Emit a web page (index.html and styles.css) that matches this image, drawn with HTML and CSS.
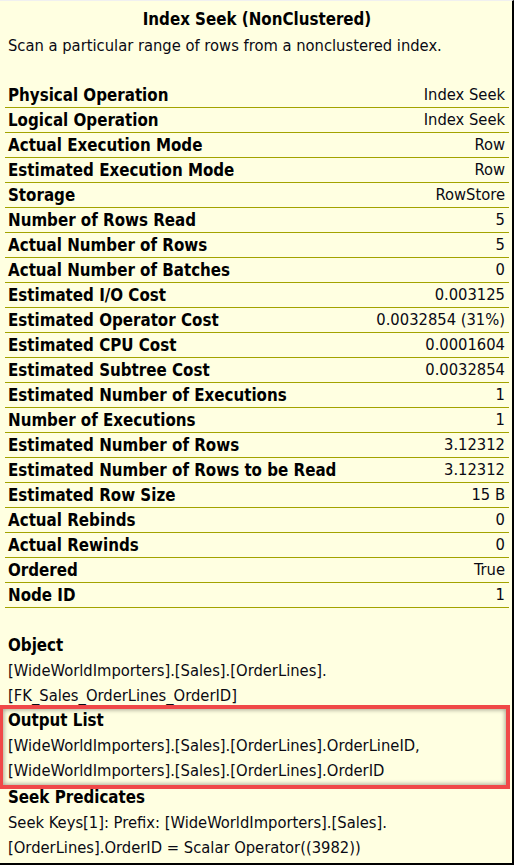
FILE: index.html
```html
<!DOCTYPE html>
<html>
<head>
<meta charset="utf-8">
<link rel="stylesheet" href="styles.css">
</head>
<body>
<div class="tip">
  <div class="title">Index Seek (NonClustered)</div>
  <div class="desc">Scan a particular range of rows from a nonclustered index.</div>
  <div class="props">
    <div class="row"><span class="k">Physical Operation</span><span class="v">Index Seek</span></div>
    <div class="row"><span class="k">Logical Operation</span><span class="v">Index Seek</span></div>
    <div class="row"><span class="k">Actual Execution Mode</span><span class="v">Row</span></div>
    <div class="row"><span class="k">Estimated Execution Mode</span><span class="v">Row</span></div>
    <div class="row"><span class="k">Storage</span><span class="v">RowStore</span></div>
    <div class="row"><span class="k">Number of Rows Read</span><span class="v">5</span></div>
    <div class="row"><span class="k">Actual Number of Rows</span><span class="v">5</span></div>
    <div class="row"><span class="k">Actual Number of Batches</span><span class="v">0</span></div>
    <div class="row"><span class="k">Estimated I/O Cost</span><span class="v">0.003125</span></div>
    <div class="row"><span class="k">Estimated Operator Cost</span><span class="v">0.0032854 (31%)</span></div>
    <div class="row"><span class="k">Estimated CPU Cost</span><span class="v">0.0001604</span></div>
    <div class="row"><span class="k">Estimated Subtree Cost</span><span class="v">0.0032854</span></div>
    <div class="row"><span class="k">Estimated Number of Executions</span><span class="v">1</span></div>
    <div class="row"><span class="k">Number of Executions</span><span class="v">1</span></div>
    <div class="row"><span class="k">Estimated Number of Rows</span><span class="v">3.12312</span></div>
    <div class="row"><span class="k">Estimated Number of Rows to be Read</span><span class="v">3.12312</span></div>
    <div class="row"><span class="k">Estimated Row Size</span><span class="v">15 B</span></div>
    <div class="row"><span class="k">Actual Rebinds</span><span class="v">0</span></div>
    <div class="row"><span class="k">Actual Rewinds</span><span class="v">0</span></div>
    <div class="row"><span class="k">Ordered</span><span class="v">True</span></div>
    <div class="row"><span class="k">Node ID</span><span class="v">1</span></div>
  </div>
  <div class="section first">
    <div class="sh">Object</div>
    <div class="sv">[WideWorldImporters].[Sales].[OrderLines].<br>[FK_Sales_OrderLines_OrderID]</div>
  </div>
  <div class="section highlighted">
    <div class="sh">Output List</div>
    <div class="sv">[WideWorldImporters].[Sales].[OrderLines].OrderLineID,<br>[WideWorldImporters].[Sales].[OrderLines].OrderID</div>
  </div>
  <div class="section seek">
    <div class="sh">Seek Predicates</div>
    <div class="sv">Seek Keys[1]: Prefix: [WideWorldImporters].[Sales].<br>[OrderLines].OrderID = Scalar Operator((3982))</div>
  </div>
</div>
</body>
</html>
```

FILE: styles.css
```css
html, body {
  margin: 0;
  padding: 0;
  background: #ffffe1;
}
.tip {
  box-sizing: border-box;
  width: 514px;
  height: 865px;
  background: #ffffe1;
  border-top: 1px solid #f0f0f0;
  border-right: 2px solid #000;
  border-bottom: 2px solid #000;
  font-family: "DejaVu Sans Condensed", "DejaVu Sans", sans-serif;
  font-size: 16.4px;
  color: #000;
  padding: 5px 3px 0 5px;
  overflow: hidden;
}
.title {
  font-weight: bold;
  font-size: 16.8px;
  text-align: center;
  line-height: 26px;
}
.desc {
  padding-left: 3px;
  line-height: 27px;
  color: #0a0a14;
}
.props {
  margin-top: 24px;
}
.row {
  display: flex;
  justify-content: space-between;
  height: 24px;
  line-height: 24px;
  border-bottom: 1px solid #a3a300;
  padding: 0 4px 0 3px;
}
.k { font-weight: bold; font-size: 16.8px; }
.v { color: #0a0a14; }
.section {
  padding-left: 3px;
  line-height: 25px;
}
.section.first { margin-top: 25px; }
.sh { font-weight: bold; font-size: 16.8px; }
.sv { color: #0a0a14; }
.highlighted {
  position: relative;
}
.highlighted::after {
  content: "";
  position: absolute;
  left: -6px;
  right: -1px;
  top: -3px;
  bottom: -6px;
  border: 4px solid #f04848;
  box-shadow: inset 0 0 4px 1px rgba(0,0,0,0.35);
  pointer-events: none;
}
.seek { margin-top: 2px; }
```
